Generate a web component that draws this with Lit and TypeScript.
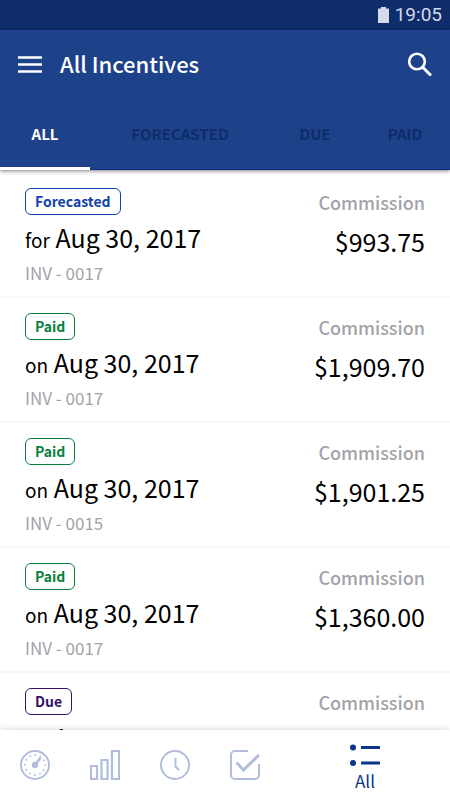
import { LitElement, html, css, svg } from "lit";
import { customElement, state } from "lit/decorators.js";
import { classMap } from "lit/directives/class-map.js";

interface Incentive {
  status: "Forecasted" | "Paid" | "Due";
  preposition: string;
  date: string;
  invoice: string;
  amount: string;
}

const incentives: Incentive[] = [
  { status: "Forecasted", preposition: "for", date: "Aug 30, 2017", invoice: "INV - 0017", amount: "$993.75" },
  { status: "Paid", preposition: "on", date: "Aug 30, 2017", invoice: "INV - 0017", amount: "$1,909.70" },
  { status: "Paid", preposition: "on", date: "Aug 30, 2017", invoice: "INV - 0015", amount: "$1,901.25" },
  { status: "Paid", preposition: "on", date: "Aug 30, 2017", invoice: "INV - 0017", amount: "$1,360.00" },
  { status: "Due", preposition: "on", date: "Aug 30, 2017", invoice: "INV - 0017", amount: "$1,360.00" },
];

const gauge = svg`
  <circle cx="15" cy="15" r="14" stroke-width="2"/>
  <circle cx="15" cy="15" r="10" stroke-width="1.8" stroke-dasharray="1.6 3.636" stroke-dashoffset="0.8"/>
  <path d="M15 15L20.5 7.8" stroke-width="2.6"/>
  <circle cx="15" cy="15" r="3.2" fill="currentColor" stroke="none"/>`;
const bars = svg`
  <path d="M1 16h6v13H1zM11.500 10h6v19h-6zM22 1h7v28h-7z" stroke-width="2.200"/>`;
const clock = svg`
  <circle cx="15" cy="15" r="14" stroke-width="2"/>
  <path d="M15.500 8v8.500l3.500 3.500" stroke-width="2"/>`;
const check = svg`
  <path d="M18 1H5a4 4 0 0 0-4 4v20a4 4 0 0 0 4 4h20a4 4 0 0 0 4-4V14" stroke-width="2"/>
  <path d="M6.500 12.500L13.500 20L29 5" stroke-width="3"/>`;

const shortcuts = [
  { label: "Dashboard", icon: gauge },
  { label: "Reports", icon: bars },
  { label: "History", icon: clock },
  { label: "Tasks", icon: check },
];

@customElement("app-root")
export class AppRoot extends LitElement {
  @state() private tab = "All";

  static styles = css`
    :host {
      display: flex;
      flex-direction: column;
      height: 100vh;
      overflow: hidden;
      background: #fff;
      color: #000;
      font-family: "Noto Sans CJK SC", "Noto Sans", sans-serif;
    }
    button {
      border: 0;
      padding: 0;
      background: none;
      color: inherit;
      font: inherit;
      cursor: pointer;
    }
    svg {
      display: block;
      fill: none;
      stroke: currentColor;
    }
    .status-bar {
      flex: none;
      display: flex;
      align-items: center;
      justify-content: flex-end;
      gap: 6px;
      height: 30px;
      padding: 0 8px;
      background: #0f2c6b;
      color: #d5daea;
      font: 19px/30px Roboto, sans-serif;
    }
    .header {
      flex: none;
      position: relative;
      z-index: 1;
      background: #1e4289;
      color: #fff;
      box-shadow: 0 1px 4px rgba(0, 0, 0, 0.5);
    }
    .bar {
      display: flex;
      align-items: center;
      box-sizing: border-box;
      height: 70px;
      padding: 0 18px 2px;
    }
    .title {
      flex: 1;
      margin: 0 0 2px 18px;
      font-size: 22px;
      line-height: 32px;
      font-weight: 500;
    }
    .tabs {
      display: grid;
      grid-template-columns: 1fr 2fr 1fr 1fr;
      height: 70px;
      box-sizing: border-box;
      border-bottom: 1px solid #0c2a78;
    }
    .tab {
      color: #0f2c6b;
      font-size: 15px;
      font-weight: 700;
      line-height: 24px;
      text-transform: uppercase;
      border-bottom: 3px solid transparent;
      margin-bottom: -1px;
    }
    .tab.active {
      color: #fff;
      border-color: #fff;
    }
    .list {
      flex: 1;
      min-height: 0;
      overflow: hidden;
      margin: 0;
      padding: 3px 0 0;
      list-style: none;
    }
    .row {
      display: flex;
      justify-content: space-between;
      box-sizing: border-box;
      height: 125px;
      padding: 15px 25px 0;
      border-bottom: 2px solid #f8f8f8;
    }
    .badge {
      display: inline-block;
      box-sizing: border-box;
      height: 27px;
      padding: 0 9px;
      border: 1px solid;
      border-radius: 6px;
      font-size: 14px;
      line-height: 24px;
      font-weight: 700;
      vertical-align: top;
    }
    .forecasted {
      color: #1241b0;
    }
    .paid {
      color: #0a8040;
    }
    .due {
      color: #361266;
    }
    .when {
      margin-top: 6px;
      font-size: 25px;
      line-height: 32px;
    }
    .prep {
      font-size: 19px;
    }
    .invoice {
      margin-top: 5px;
      color: #a2a2a8;
      font-size: 17px;
      line-height: 24px;
    }
    .sum {
      text-align: right;
    }
    .kind {
      color: #a2a2a8;
      font-size: 18px;
      font-weight: 500;
      line-height: 28px;
    }
    .amount {
      margin-top: 9px;
      font-size: 25px;
      line-height: 32px;
    }
    .nav {
      flex: none;
      position: relative;
      display: flex;
      height: 70px;
      background: #fff;
      color: #b0bedb;
      box-shadow: 0 0 8px rgba(0, 0, 0, 0.18);
    }
    .shortcut {
      width: 70px;
      display: grid;
      place-items: center;
    }
    .current {
      flex: 1;
      display: flex;
      flex-direction: column;
      align-items: center;
      gap: 2px;
      padding-top: 13px;
      color: #0b3688;
      font-size: 17px;
      line-height: 24px;
    }
  `;

  render() {
    return html`
      <div class="status-bar">
        <svg width="11" height="16" viewBox="0 0 11 16" aria-hidden="true">
          <path d="M3 0h5v1.500h3V16H0V1.500h3z" fill="currentColor" stroke="none" />
        </svg>
        <span>19:05</span>
      </div>
      <header class="header">
        <div class="bar">
          <button aria-label="Menu">
            <svg width="24" height="18" viewBox="0 0 24 18">
              <path d="M0 2.500h24M0 9.500h24M0 16.500h24" stroke-width="2.400" />
            </svg>
          </button>
          <h1 class="title">All Incentives</h1>
          <button aria-label="Search">
            <svg width="24" height="24" viewBox="0 0 24 24">
              <circle cx="9" cy="9.500" r="7.800" stroke-width="2.600" />
              <path d="M14.500 15L23 23.500" stroke-width="3" />
            </svg>
          </button>
        </div>
        <nav class="tabs">
          ${["All", "Forecasted", "Due", "Paid"].map(
            (name) => html`<button
              class=${classMap({ tab: true, active: name === this.tab })}
              @click=${() => (this.tab = name)}
            >${name}</button>`
          )}
        </nav>
      </header>
      <ul class="list">
        ${incentives
          .filter((item) => this.tab === "All" || item.status === this.tab)
          .map(
            (item) => html`<li class="row">
              <div>
                <span class="badge ${item.status.toLowerCase()}">${item.status}</span>
                <div class="when"><span class="prep">${item.preposition}</span> ${item.date}</div>
                <div class="invoice">${item.invoice}</div>
              </div>
              <div class="sum">
                <div class="kind">Commission</div>
                <div class="amount">${item.amount}</div>
              </div>
            </li>`
          )}
      </ul>
      <nav class="nav">
        ${shortcuts.map(
          (item) => html`<button class="shortcut" aria-label=${item.label}>
            <svg width="30" height="30" viewBox="0 0 30 30">${item.icon}</svg>
          </button>`
        )}
        <button class="current">
          <svg width="30" height="24" viewBox="0 0 30 24" aria-hidden="true">
            <path d="M11 4.500h19M11 20h19" stroke-width="3" />
            <circle cx="3" cy="4.500" r="3" fill="currentColor" stroke="none" />
            <circle cx="3" cy="20" r="3" fill="currentColor" stroke="none" />
          </svg>
          All
        </button>
      </nav>
    `;
  }
}
